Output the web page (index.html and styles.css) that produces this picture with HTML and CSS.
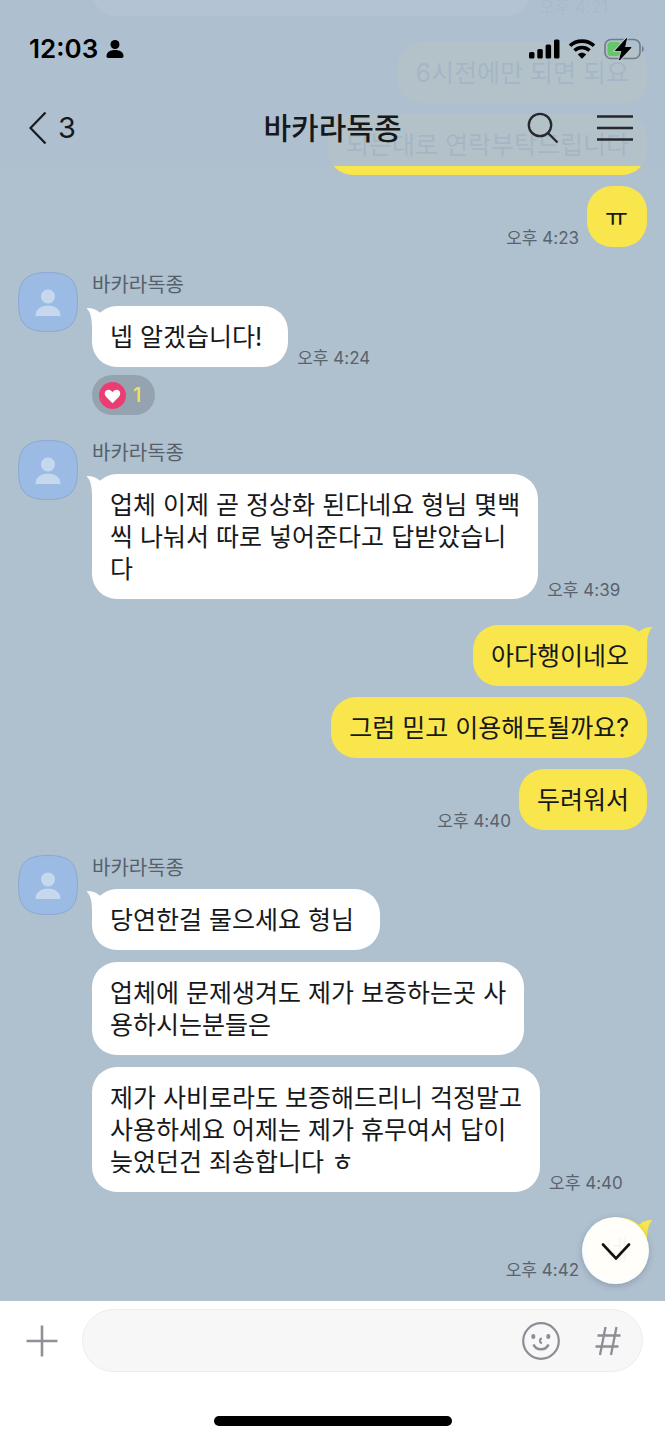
FILE: index.html
```html
<!DOCTYPE html>
<html lang="ko">
<head>
<meta charset="utf-8">
<meta name="viewport" content="width=device-width, initial-scale=1">
<title>바카라독종</title>
<link rel="stylesheet" href="styles.css">
</head>
<body>
<svg class="defs" aria-hidden="true">
  <symbol id="avatar" viewBox="0 0 60 60">
    <path d="M30 .5C52 .5 59.500 8 59.500 30S52 59.500 30 59.500 .5 52 .5 30 8 .5 30 .5z" fill="#9bbbe4" stroke="#8aaad2"/>
    <circle cx="30" cy="24.500" r="7" fill="#c6d8ee"/>
    <path d="M17.500 44c0-6.500 5.500-10.500 12.500-10.500S42.500 37.500 42.500 44z" fill="#c6d8ee"/>
  </symbol>
  <symbol id="tail" viewBox="0 0 18 26">
    <path d="M0 0C5 0 9 1.500 12 4L18 8V26H5V20C5 11 3.500 4 0 .8z" fill="currentColor"/>
  </symbol>
</svg>
<div class="app">
  <header class="header">
    <div class="status">
      <div class="status-side">
        <span class="clock">12:03</span>
        <svg width="18" height="20" viewBox="0 0 18 20"><circle cx="9" cy="5.500" r="4.500"/><path d="M.5 17c0-4 4-6 8.500-6s8.500 2 8.500 6c0 1.300-.5 2-1.800 2H2.300C1 19 .5 18.300.5 17z"/></svg>
      </div>
      <div class="status-side status-right">
        <svg width="31" height="20" viewBox="0 0 31 20"><rect x="0" y="13" width="5.500" height="6.500" rx="1.500"/><rect x="8.300" y="10" width="5.500" height="9.500" rx="1.500"/><rect x="16.600" y="5.500" width="5.500" height="14" rx="1.500"/><rect x="25" y="0.500" width="5.500" height="19" rx="1.500"/></svg>
        <svg width="28" height="20" viewBox="0 0 28 20" fill="none" stroke="#000" stroke-width="3.600"><path d="M2 6.800C8.500.6 19.500.6 26 6.800"/><path d="M6.500 11.500c4.300-4 10.700-4 15 0"/><path d="M9.800 15.500c2.500-2.400 5.900-2.400 8.400 0L14 19.700z" fill="#000" stroke="none"/></svg>
        <svg width="41" height="24" viewBox="0 0 41 24"><rect x="1" y="2.500" width="35" height="19" rx="6" fill="none" stroke="#6f7b86" stroke-width="1.600"/><path d="M38 9c2.300.8 2.300 5.200 0 6z" fill="#6f7b86"/><rect x="3.500" y="5" width="13" height="14" rx="3.500" fill="#65c667"/><path d="M22.500 1.500L11.500 13.500h6.500l-2.500 9.500L27 10.500h-6.500z" stroke="#b0c0ca" stroke-width="3"/><path d="M22.500 1.500L11.500 13.500h6.500l-2.500 9.500L27 10.500h-6.500z" stroke="#000" stroke-linejoin="round"/></svg>
      </div>
    </div>
    <nav class="nav">
      <button class="back" type="button" aria-label="뒤로">
        <svg width="18" height="34" viewBox="0 0 18 34" fill="none" stroke="#191b1f" stroke-width="2.300"><path d="M16.500 1.500L1.500 17l15 15.500"/></svg>
        <span>3</span>
      </button>
      <h1 class="title">바카라독종</h1>
      <div class="actions">
        <button type="button" aria-label="검색"><svg width="32" height="32" viewBox="0 0 32 32" fill="none" stroke="#25282c" stroke-width="2.300"><circle cx="13" cy="13" r="11.200"/><path d="M21 21l9.500 9.500"/></svg></button>
        <button type="button" aria-label="메뉴"><svg width="36" height="28" viewBox="0 0 36 28" fill="none" stroke="#25282c" stroke-width="2.400"><path d="M0 2.500h36M0 14h36M0 25.500h36"/></svg></button>
      </div>
    </nav>
  </header>

  <main class="chat">
    <div class="log">
      <section class="group in">
        <div class="stack">
          <div class="line"><p class="bubble wide"></p><time class="time">오후 4:21</time></div>
        </div>
      </section>
      <section class="group out">
        <div class="line"><p class="bubble">6시전에만 되면 되요</p></div>
        <div class="line"><p class="bubble">되는대로 연락부탁드립니다</p></div>
        <div class="line"><time class="time">오후 4:23</time><p class="bubble">ㅠ</p></div>
      </section>
      <section class="group in">
        <svg class="avatar"><use href="#avatar"/></svg>
        <div class="stack">
          <h2 class="name">바카라독종</h2>
          <div class="line"><p class="bubble lead"><svg class="tail"><use href="#tail"/></svg>넵 알겠습니다!</p><time class="time">오후 4:24</time></div>
          <button class="reaction" type="button">
            <svg width="27" height="27" viewBox="0 0 27 27"><circle cx="13.500" cy="13.500" r="13.500" fill="#ec3d73"/><path d="M13.500 21.300L7 14.700C4.500 12 6 7.800 9.300 7.800c1.900 0 3.300 1 4.200 2.400.9-1.400 2.300-2.400 4.200-2.400 3.300 0 4.800 4.200 2.300 6.900z" fill="#fff"/></svg>
            <span>1</span>
          </button>
        </div>
      </section>
      <section class="group in">
        <svg class="avatar"><use href="#avatar"/></svg>
        <div class="stack">
          <h2 class="name">바카라독종</h2>
          <div class="line"><p class="bubble"><svg class="tail"><use href="#tail"/></svg>업체 이제 곧 정상화 된다네요 형님 몇백<br>씩 나눠서 따로 넣어준다고 답받았습니<br>다</p><time class="time">오후 4:39</time></div>
        </div>
      </section>
      <section class="group out">
        <div class="line"><p class="bubble"><svg class="tail"><use href="#tail"/></svg>아다행이네오</p></div>
        <div class="line"><p class="bubble">그럼 믿고 이용해도될까요?</p></div>
        <div class="line"><time class="time">오후 4:40</time><p class="bubble">두려워서</p></div>
      </section>
      <section class="group in">
        <svg class="avatar"><use href="#avatar"/></svg>
        <div class="stack">
          <h2 class="name">바카라독종</h2>
          <div class="line"><p class="bubble lead"><svg class="tail"><use href="#tail"/></svg>당연한걸 물으세요 형님</p></div>
          <div class="line"><p class="bubble">업체에 문제생겨도 제가 보증하는곳 사<br>용하시는분들은</p></div>
          <div class="line"><p class="bubble">제가 사비로라도 보증해드리니 걱정말고<br>사용하세요 어제는 제가 휴무여서 답이<br>늦었던건 죄송합니다 ㅎ</p><time class="time">오후 4:40</time></div>
        </div>
      </section>
      <section class="group out">
        <div class="line"><time class="time">오후 4:42</time><p class="bubble"><svg class="tail"><use href="#tail"/></svg>네</p></div>
      </section>
    </div>
    <button class="jump" type="button" aria-label="맨 아래로"><svg width="30" height="18" viewBox="0 0 30 18" fill="none" stroke="#111" stroke-width="2.600" stroke-linecap="round"><path d="M2 2.500l13 14L28 2.500"/></svg></button>
  </main>

  <footer class="footer">
    <form class="composer">
      <button type="button" aria-label="추가"><svg width="32" height="32" viewBox="0 0 32 32" stroke="#909198" stroke-width="2.600"><path d="M16 .5v31M.5 16h31"/></svg></button>
      <div class="field">
        <input type="text" aria-label="메시지 입력">
        <button type="button" aria-label="이모티콘"><svg width="38" height="38" viewBox="0 0 38 38" fill="none" stroke="#8d8e95" stroke-width="2.200"><circle cx="19" cy="19" r="17.800"/><path d="M11.500 22.500c2.700 6.300 12.300 6.300 15 0" stroke-width="2.600"/><path d="M20 16.500c-2.700 0-2.700 4.500 0 4.500" stroke-width="2"/><rect x="9.300" y="12" width="4" height="5" rx="2" fill="#8d8e95" stroke="none"/><rect x="24.300" y="12" width="4" height="5" rx="2" fill="#8d8e95" stroke="none"/></svg></button>
        <button type="button" aria-label="샵검색"><svg width="26" height="30" viewBox="0 0 26 30" fill="none" stroke="#8d8e95" stroke-width="2.300"><path d="M10.500 1L5 29M21.500 1L16 29M2.500 9.500H25.500M.5 20.500h23"/></svg></button>
      </div>
    </form>
    <div class="home"></div>
  </footer>
</div>
</body>
</html>
```
FILE: styles.css
```css
* {
  box-sizing: border-box;
}

body {
  margin: 0;
  background: #fff;
  color: #17181a;
  font-family: Inter, "Noto Sans CJK KR", sans-serif;
}

h1, h2, p {
  margin: 0;
  font-weight: 400;
}

button {
  display: flex;
  align-items: center;
  justify-content: center;
  padding: 0;
  border: 0;
  background: none;
  color: inherit;
  font: inherit;
}

svg {
  display: block;
  flex: none;
}

.defs {
  position: absolute;
  width: 0;
  height: 0;
}

.app {
  position: relative;
  display: flex;
  flex-direction: column;
  height: 100vh;
}

/* Translucent bars over the scrolled conversation */
.header {
  position: absolute;
  inset: 0 0 auto;
  z-index: 2;
  background: rgba(174, 191, 208, 0.94);
}

.status {
  display: flex;
  align-items: center;
  justify-content: space-between;
  height: 90px;
  padding: 8px 20px 0 29px;
  color: #000;
}

.status-side {
  display: flex;
  align-items: center;
  gap: 8px;
}

.clock {
  font-size: 26px;
  font-weight: 600;
  line-height: 32px;
}

.nav {
  display: grid;
  grid-template-columns: 1fr auto 1fr;
  align-items: center;
  height: 76px;
  padding: 0 29px;
}

.back {
  justify-self: start;
  gap: 11px;
  font-size: 29px;
  line-height: 36px;
}

.title {
  font-size: 30px;
  font-weight: 500;
  line-height: 40px;
}

.actions {
  display: flex;
  align-items: center;
  justify-self: end;
  gap: 38px;
  padding-right: 3px;
}

.chat {
  position: relative;
  flex: 1;
  min-height: 0;
  overflow: hidden;
  background: #afc0cf;
}

.log {
  display: flex;
  flex-direction: column;
  justify-content: flex-end;
  gap: 25px;
  height: 100%;
  padding: 0 18px 22px;
}

.group {
  display: flex;
  flex: none;
}

.in {
  gap: 14px;
}

.in .stack {
  display: flex;
  flex-direction: column;
  gap: 12px;
}

.in > .stack:first-child {
  margin-left: 74px;
}

.out {
  flex-direction: column;
  align-items: flex-end;
  gap: 11px;
  padding-top: 1px;
}

.avatar {
  width: 60px;
  height: 60px;
}

.name {
  height: 22px;
  color: #56606a;
  font-size: 20px;
  line-height: 26px;
}

.line {
  display: flex;
  align-items: flex-end;
  gap: 8px;
}

.in .line {
  gap: 9px;
}

.bubble {
  position: relative;
  min-width: 60px;
  min-height: 61px;
  padding: 15px 18px 14px;
  border-radius: 25px;
  font-size: 25px;
  line-height: 32px;
  white-space: nowrap;
}

.in .bubble {
  background: #fff;
}

.in .lead {
  padding-right: 26px;
}

.out .bubble {
  background: #f9e64c;
}

.wide {
  width: 438px;
}

.tail {
  position: absolute;
  top: 2px;
  left: -5px;
  width: 18px;
  height: 26px;
  color: #fff;
}

.out .tail {
  right: -5px;
  left: auto;
  color: #f9e64c;
  transform: scaleX(-1);
}

.time {
  color: #59636d;
  font-size: 17px;
  line-height: 18px;
  white-space: nowrap;
}

.reaction {
  align-self: flex-start;
  gap: 7px;
  height: 40px;
  margin-top: -4px;
  padding: 0 14px 0 7px;
  border-radius: 20px;
  background: #95a3b1;
  color: #f4e15a;
  font-size: 20px;
  font-weight: 500;
}

.jump {
  position: absolute;
  right: 16px;
  bottom: 17px;
  width: 67px;
  height: 67px;
  border-radius: 50%;
  background: rgba(255, 255, 255, 0.96);
  box-shadow: 0 2px 6px rgba(40, 60, 80, 0.25);
}

.footer {
  background: #fff;
  padding: 8px 0 14px;
}

.composer {
  display: flex;
  align-items: center;
  gap: 24px;
  padding: 0 22px 0 26px;
}

.field {
  display: flex;
  flex: 1;
  align-items: center;
  gap: 35px;
  min-width: 0;
  height: 63px;
  padding: 0 21px 0 24px;
  border: 1px solid #ededef;
  border-radius: 32px;
  background: #f7f7f8;
}

.field input {
  flex: 1;
  min-width: 0;
  border: 0;
  outline: 0;
  background: none;
  font: inherit;
  font-size: 25px;
}

.home {
  width: 238px;
  height: 10px;
  margin: 44px auto 0;
  border-radius: 5px;
  background: #000;
}
```
